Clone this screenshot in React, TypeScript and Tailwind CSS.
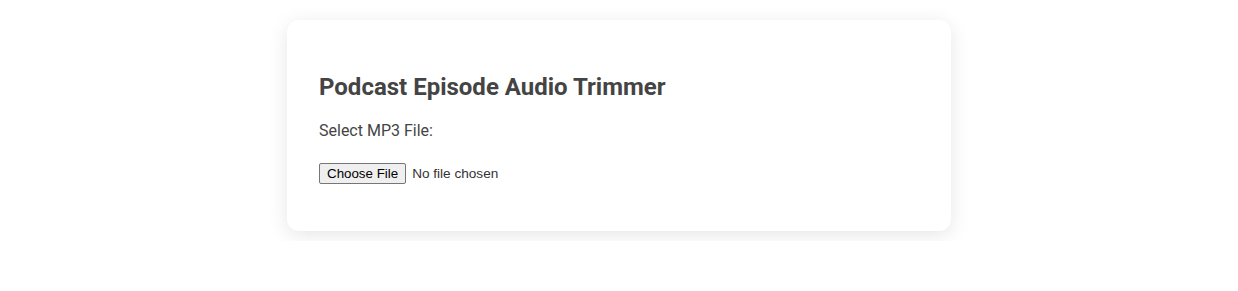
import React from "react";

export default function App() {
  return (
    <div className="w-full overflow-hidden bg-white pt-[20px] pb-[10px]">
      <div
        className="mx-auto w-[664px] rounded-[12px] bg-white px-[32px] pt-[33px] pb-[32px] shadow-[0_4px_20px_rgba(0,0,0,0.1)]"
        style={{ fontFamily: "Roboto, 'Noto Sans', sans-serif" }}
      >
        <h2 className="mt-[20px] mb-[21px] text-[24px] font-bold leading-[1.172] text-[#444]">
          Podcast Episode Audio Trimmer
        </h2>
        <label className="block text-[16px] leading-[1.172] text-[#444]">Select MP3 File:</label>
        <input
          type="file"
          accept=".mp3,audio/mpeg"
          className="mt-[22px] mb-[15px] block text-[13.6px] leading-[normal] text-[#333] [font-family:Arial,'Liberation_Sans',sans-serif] file:mr-[6px] file:rounded-[2px] file:border file:border-solid file:border-[#767676] file:bg-[#efefef] file:px-[7px] file:py-[2px] file:text-[13.333px] file:leading-[normal] file:text-black file:[font-family:Arial,'Liberation_Sans',sans-serif]"
        />
      </div>
    </div>
  );
}
